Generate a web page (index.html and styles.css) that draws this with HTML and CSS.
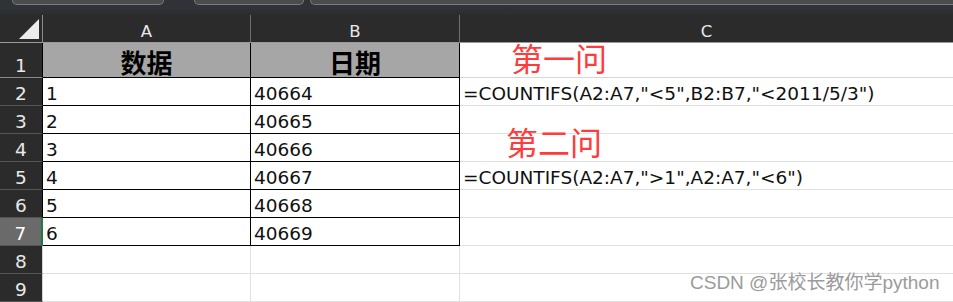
FILE: index.html
```html
<!DOCTYPE html>
<html lang="zh">
<head>
<meta charset="utf-8">
<title>COUNTIFS</title>
<link rel="stylesheet" href="styles.css">
</head>
<body>
<div class="app">
  <div class="topbar">
    <div class="tab tab-1"></div>
    <div class="tab tab-2"></div>
    <div class="tab tab-3"></div>
  </div>
  <div class="gap"></div>
  <div class="sheet">
    <div class="corner"><span class="tri"></span></div>
    <div class="colhead">A</div>
    <div class="colhead">B</div>
    <div class="colhead last">C</div>

    <div class="rowhead r1">1</div>
    <div class="cell a title">数据</div>
    <div class="cell b title">日期</div>
    <div class="cell c r1"></div>

    <div class="rowhead">2</div>
    <div class="cell a">1</div>
    <div class="cell b">40664</div>
    <div class="cell c">=COUNTIFS(A2:A7,"&lt;5",B2:B7,"&lt;2011/5/3")</div>

    <div class="rowhead">3</div>
    <div class="cell a">2</div>
    <div class="cell b">40665</div>
    <div class="cell c"></div>

    <div class="rowhead">4</div>
    <div class="cell a">3</div>
    <div class="cell b">40666</div>
    <div class="cell c"></div>

    <div class="rowhead">5</div>
    <div class="cell a">4</div>
    <div class="cell b">40667</div>
    <div class="cell c">=COUNTIFS(A2:A7,"&gt;1",A2:A7,"&lt;6")</div>

    <div class="rowhead">6</div>
    <div class="cell a">5</div>
    <div class="cell b">40668</div>
    <div class="cell c"></div>

    <div class="rowhead sel">7</div>
    <div class="cell a">6</div>
    <div class="cell b">40669</div>
    <div class="cell c"></div>

    <div class="rowhead plain">8</div>
    <div class="cell grid"></div>
    <div class="cell grid"></div>
    <div class="cell c"></div>

    <div class="rowhead plain">9</div>
    <div class="cell grid"></div>
    <div class="cell grid"></div>
    <div class="cell c"></div>
  </div>

  <div class="note note-1">第一问</div>
  <div class="note note-2">第二问</div>
  <div class="watermark">CSDN @张校长教你学python</div>
</div>
</body>
</html>
```

FILE: styles.css
```css
* { box-sizing: border-box; }

html, body {
  margin: 0;
  padding: 0;
  background: #ffffff;
}

.app {
  position: relative;
  width: 953px;
  height: 302px;
  overflow: hidden;
  font-family: "DejaVu Sans", "Noto Sans CJK SC", sans-serif;
}

.topbar {
  height: 5px;
  background: #2f3237;
  display: flex;
}

.tab {
  height: 5px;
  background: #4b4b4b;
  border: 1px solid #7a7a7a;
  border-top: none;
  border-radius: 0 0 6px 6px;
}

.tab-1 { margin-left: 12px; width: 152px; }
.tab-2 { margin-left: 30px; width: 110px; }
.tab-3 { margin-left: 6px; flex: 1; border-right: none; border-radius: 0 0 0 6px; }

.gap {
  height: 10px;
  background: linear-gradient(#30343a, #2c2d2f);
}

.sheet {
  display: grid;
  grid-template-columns: 43px 208px 209px 1fr;
  grid-template-rows: 28px 35px repeat(8, 28px);
}

.corner {
  background: #2b2b2b;
  border-right: 1px solid #8c8c8c;
  border-bottom: 1px solid #9a9a9a;
  position: relative;
}

.tri {
  position: absolute;
  right: 3px;
  bottom: 3px;
  width: 0;
  height: 0;
  border-left: 20px solid transparent;
  border-bottom: 20px solid #ececec;
}

.colhead {
  background: #2b2b2b;
  color: #e8e8e8;
  font-size: 16.5px;
  line-height: 20px;
  display: flex;
  align-items: flex-end;
  justify-content: center;
  border-right: 1px solid #6e6e6e;
  border-bottom: 1px solid #9a9a9a;
}

.colhead.last { border-right: none; }

.rowhead {
  background: #2b2b2b;
  color: #e8e8e8;
  font-size: 18.5px;
  line-height: 22px;
  display: flex;
  align-items: flex-end;
  justify-content: center;
  border-right: 1px solid #000000;
  border-bottom: 1px solid #555555;
}

.rowhead.r1 { border-bottom-color: #8a8a8a; }
.rowhead.sel { background: #6a6a6a; color: #ffffff; border-right: 2px solid #1f7a45; }
.rowhead.plain { border-right-color: #d4d4d4; }

.cell {
  font-size: 18.5px;
  line-height: 22px;
  color: #111111;
  padding: 0 0 0 3px;
  display: flex;
  align-items: flex-end;
  white-space: nowrap;
  border-right: 1px solid #000000;
  border-bottom: 1px solid #000000;
  background: #ffffff;
}

.cell.c {
  border-right: none;
  border-bottom: 1px solid #e1e1e1;
  overflow: visible;
}

.cell.c.r1 { border-bottom-color: #d6d6d6; }

.cell.grid {
  border-right: 1px solid #e1e1e1;
  border-bottom: 1px solid #e1e1e1;
}

.cell.title {
  background: #a6a6a6;
  font-family: "Noto Sans CJK SC", sans-serif;
  font-weight: 700;
  font-size: 26px;
  line-height: 30px;
  color: #000000;
  justify-content: center;
  padding: 0;
}

.note {
  position: absolute;
  font-family: "Noto Sans CJK SC", sans-serif;
  font-size: 32px;
  line-height: 32px;
  color: #ff3b3b;
  white-space: nowrap;
}

.note-1 { left: 511px; top: 41px; }
.note-2 { left: 506px; top: 125px; }

.watermark {
  position: absolute;
  left: 690px;
  top: 272px;
  font-family: "Liberation Sans", "Noto Sans CJK SC", sans-serif;
  font-size: 19px;
  line-height: 22px;
  color: #9b9b9b;
  white-space: nowrap;
  text-shadow: 0 0 1px #ffffff;
}
```
